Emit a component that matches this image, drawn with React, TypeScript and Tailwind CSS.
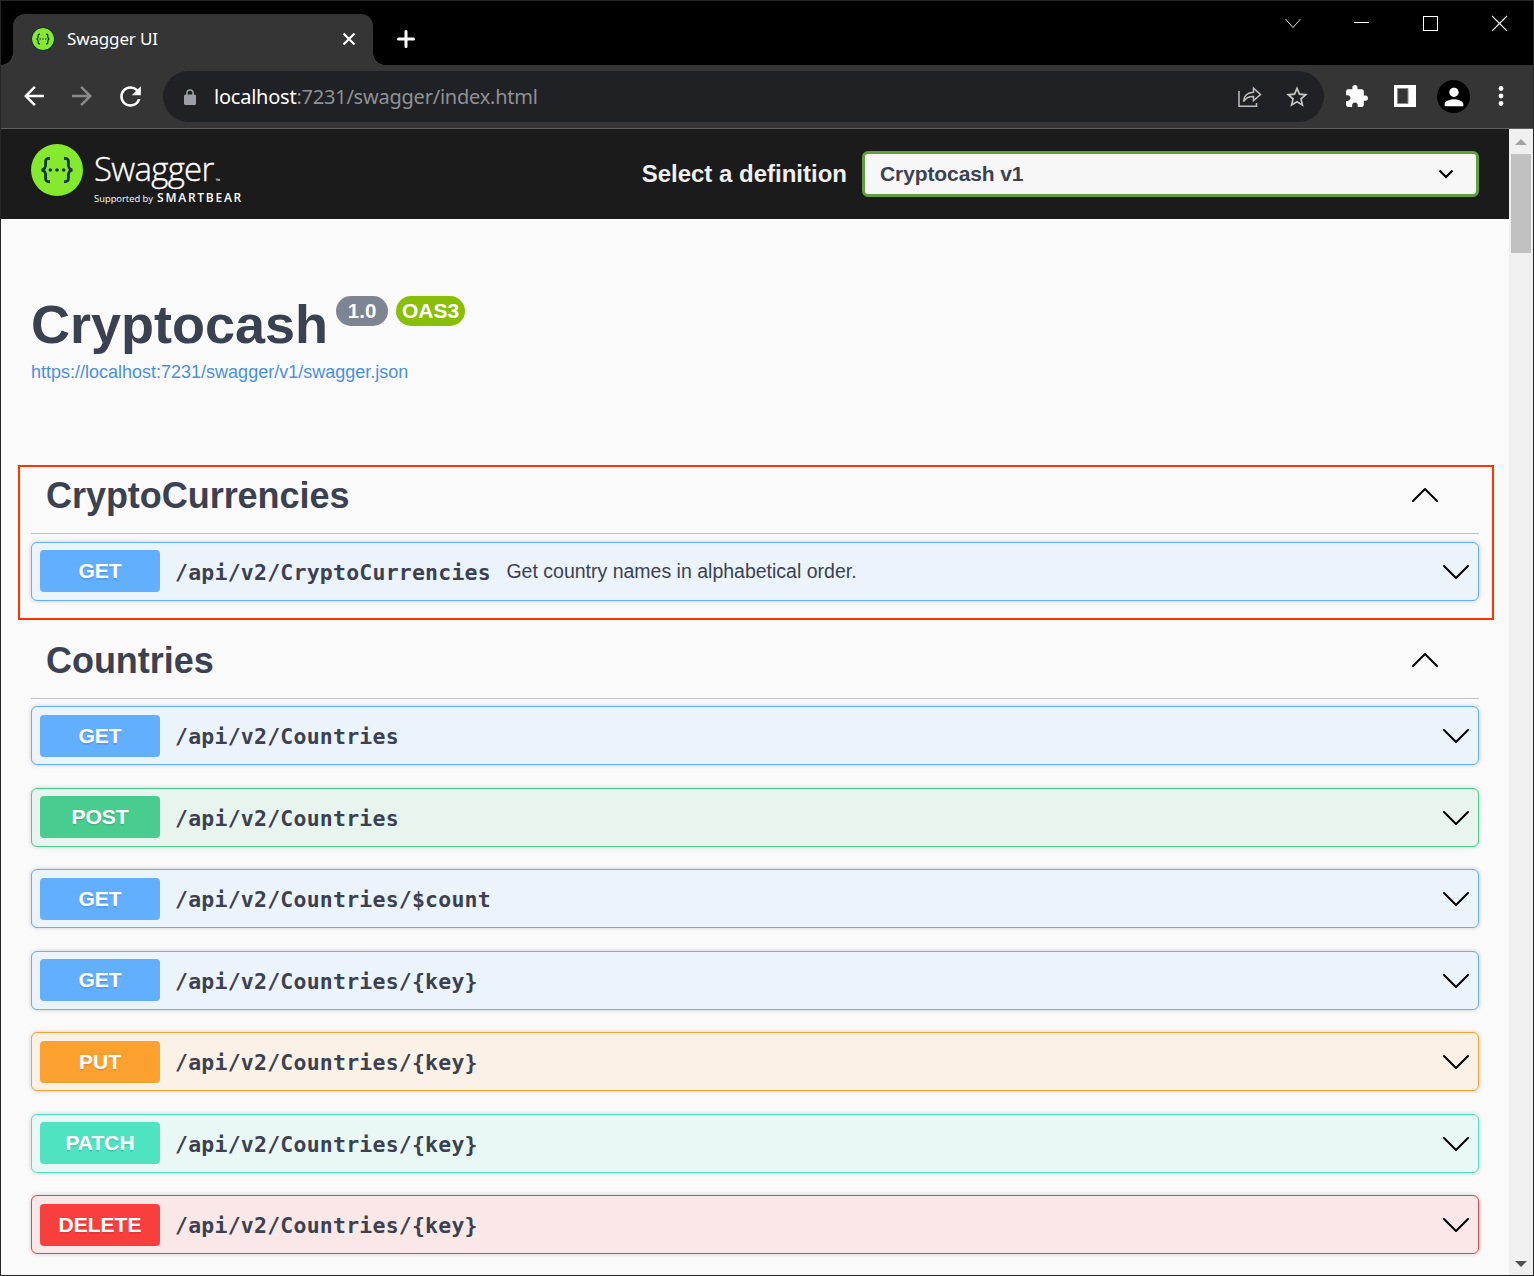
import type { ReactNode } from "react";
import {
  MdArrowBack,
  MdArrowForward,
  MdExtension,
  MdPerson,
  MdRefresh,
  MdStarBorder,
} from "react-icons/md";

type Method = "GET" | "POST" | "PUT" | "PATCH" | "DELETE";

const METHOD_STYLES: Record<Method, { row: string; badge: string }> = {
  GET: { row: "border-[#61affe] bg-[#ebf3fb]", badge: "bg-[#61affe]" },
  POST: { row: "border-[#49cc90] bg-[#e7f5ee]", badge: "bg-[#49cc90]" },
  PUT: { row: "border-[#fca130] bg-[#fbf1e6]", badge: "bg-[#fca130]" },
  PATCH: { row: "border-[#50e3c2] bg-[#e9f8f4]", badge: "bg-[#50e3c2]" },
  DELETE: { row: "border-[#f93e3e] bg-[#fae7e7]", badge: "bg-[#f93e3e]" },
};

const COUNTRY_OPERATIONS: { method: Method; path: string }[] = [
  { method: "GET", path: "/api/v2/Countries" },
  { method: "POST", path: "/api/v2/Countries" },
  { method: "GET", path: "/api/v2/Countries/$count" },
  { method: "GET", path: "/api/v2/Countries/{key}" },
  { method: "PUT", path: "/api/v2/Countries/{key}" },
  { method: "PATCH", path: "/api/v2/Countries/{key}" },
  { method: "DELETE", path: "/api/v2/Countries/{key}" },
];

function SwaggerMark({ className }: { className: string }) {
  return (
    <svg viewBox="0 0 52 52" className={className}>
      <circle cx="26" cy="26" r="26" fill="#85ea2d" />
      <g fill="none" stroke="#173647" strokeWidth="2.9">
        <path d="M19 14.3c-4 0-4.6 1.2-4.4 4.6.2 3.8 0 6.6-4 7.1 4 .5 4.2 3.3 4 7.1-.2 3.4.4 4.6 4.4 4.6" />
        <path d="M33 14.3c4 0 4.6 1.2 4.4 4.6-.2 3.8 0 6.6 4 7.1-4 .5-4.2 3.3-4 7.1.2 3.4-.4 4.6-4.4 4.6" />
      </g>
      <g fill="#173647">
        <circle cx="19.3" cy="26" r="1.8" />
        <circle cx="26" cy="26" r="1.8" />
        <circle cx="32.7" cy="26" r="1.8" />
      </g>
    </svg>
  );
}

function Chevron({ up = false }: { up?: boolean }) {
  return (
    <svg
      width="28"
      height="16"
      viewBox="0 0 28 16"
      className="shrink-0"
      fill="none"
      stroke="#000"
      strokeWidth="2"
      strokeLinecap="round"
      strokeLinejoin="round"
    >
      <path d={up ? "M2 14 14 2l12 12" : "M2 2l12 12L26 2"} />
    </svg>
  );
}

function TitleBar() {
  return (
    <div className="flex h-16 shrink-0 items-end bg-black">
      <div className="size-3 bg-[radial-gradient(circle_at_0_0,transparent_11.5px,#353535_12px)]" />
      <div className="flex h-[51px] w-[360px] items-center rounded-t-xl bg-[#353535] pr-4 pb-0.5 pl-[19px]">
        <SwaggerMark className="size-[22px] shrink-0 rounded-full ring-1 ring-[#173647]" />
        <span className="ml-[13px] grow font-['Noto_Sans'] text-[17px] tracking-[-0.15px] text-white">Swagger UI</span>
        <svg width="16" height="16" viewBox="0 0 16 16" stroke="#fff" strokeWidth="2.2">
          <path d="M2.5 2.5l11 11M13.5 2.5l-11 11" />
        </svg>
      </div>
      <div className="size-3 bg-[radial-gradient(circle_at_100%_0,transparent_11.5px,#353535_12px)]" />
      <svg className="mb-4 ml-[11px]" width="20" height="20" viewBox="0 0 20 20" stroke="#fff" strokeWidth="3" strokeLinecap="round">
        <path d="M10 2.5v15M2.5 10h15" />
      </svg>
      <div className="mr-[25px] ml-auto flex items-center gap-[53px] self-start pt-[14px]">
        <svg width="16" height="16" viewBox="0 0 16 16" fill="none" stroke="#ddd" strokeWidth="1">
          <path d="M.5 4 8 12.5 15.5 4" />
        </svg>
        <svg width="16" height="16" viewBox="0 0 16 16" stroke="#fff" strokeWidth="1">
          <path d="M0 7.5h15" />
        </svg>
        <svg width="16" height="16" viewBox="0 0 16 16" fill="none" stroke="#fff" strokeWidth="1">
          <rect x=".5" y="1.5" width="14" height="14" />
        </svg>
        <svg width="16" height="16" viewBox="0 0 16 16" stroke="#fff" strokeWidth="1.1">
          <path d="M0 1l15 15M15 1L0 16" />
        </svg>
      </div>
    </div>
  );
}

function Toolbar() {
  return (
    <div className="flex h-[64px] shrink-0 items-center border-b border-[#5f5f5f] bg-[#353535] pl-[18px] text-white">
      <MdArrowBack size={30} className="mb-0.5 shrink-0" />
      <MdArrowForward size={30} className="mb-0.5 ml-[18px] shrink-0 text-[#8a8a8a]" />
      <MdRefresh size={31} className="mb-px ml-[18px] shrink-0" />
      <div className="ml-[17px] flex h-[51px] w-[1161px] shrink-0 items-center rounded-full bg-[#202124] pr-3.5 pl-[21px]">
        <svg width="12" height="16" viewBox="0 0 12 16" className="shrink-0">
          <rect y="5.5" width="12" height="10.5" rx="1.5" fill="#9aa0a6" />
          <path d="M2.9 6V4a3.1 3.1 0 0 1 6.2 0v2" fill="none" stroke="#9aa0a6" strokeWidth="1.5" />
        </svg>
        <span className="ml-[18px] grow font-['Noto_Sans'] text-[20px] tracking-[-0.23px] whitespace-nowrap text-[#8f9194]">
          <span className="text-white">localhost</span>:7231/swagger/index.html
        </span>
        <svg width="24" height="22" viewBox="0 0 24 22" fill="none" stroke="#bdbdbd" strokeWidth="1.5" className="mr-[22px]">
          <path d="M1 5v15.2h17.5V17" />
          <path d="M5.5 15.5C6 9 10 6.5 15.5 6.3V2.2l7 6.3-7 6v-4.1C11 10.2 8 11.5 5.5 15.5Z" />
        </svg>
        <MdStarBorder size={26} className="shrink-0 text-[#c4c4c4]" />
      </div>
      <MdExtension size={25} className="mb-px ml-5 shrink-0" />
      <svg width="22" height="22" viewBox="0 0 22 22" className="mb-0.5 ml-[25px] shrink-0">
        <path d="M0 0h22v22H0z" fill="#fff" />
        <path d="M3.5 3.5h10.500v15H3.500z" fill="#353535" stroke="#8a8a8a" />
      </svg>
      <div className="ml-[21px] flex size-[33px] shrink-0 items-center justify-center rounded-full bg-black">
        <MdPerson size={28} />
      </div>
      <svg width="6" height="22" viewBox="0 0 6 22" fill="#fff" className="mb-0.5 ml-7 shrink-0">
        <circle cx="3" cy="3.5" r="2.4" />
        <circle cx="3" cy="11" r="2.4" />
        <circle cx="3" cy="18.5" r="2.4" />
      </svg>
    </div>
  );
}

function Topbar() {
  return (
    <header className="flex h-[90px] shrink-0 items-center bg-[#1b1b1b] pr-[30px] pl-[30px]">
      <SwaggerMark className="mb-2 size-[52px] shrink-0" />
      <div className="ml-[11px] flex flex-col pt-[5px] text-white">
        <div className="flex h-[42px] items-end font-['Open_Sans'] leading-[42px]">
          <span className="text-[33px] font-light tracking-[-0.7px] [-webkit-text-stroke:0.35px_#fff]">Swagger</span>
          <span className="pb-[6px] pl-0.5 text-[6px] leading-[6px]">™</span>
        </div>
        <div className="flex h-4 items-baseline font-['Open_Sans'] leading-4 whitespace-nowrap">
          <span className="text-[9.4px]">Supported by</span>
          <span className="ml-1 text-[12px] font-semibold tracking-[1.75px]">SMARTBEAR</span>
        </div>
      </div>
      <span className="ml-auto text-2xl font-bold whitespace-nowrap text-[#f0f0f0]">Select a definition</span>
      <div className="ml-[15px] flex h-[46px] w-[617px] items-center justify-between rounded-md border-[3px] border-[#62a03f] bg-[#f7f7f7] pr-[22px] pl-[15px]">
        <span className="text-[21px] font-bold tracking-[-0.1px] text-[#3b4151]">Cryptocash v1</span>
        <svg width="16" height="10" viewBox="0 0 16 10" fill="none" stroke="#000" strokeWidth="2.2">
          <path d="M1.5 1.5 8 8l6.5-6.5" />
        </svg>
      </div>
    </header>
  );
}

function Operation({ method, path, summary }: { method: Method; path: string; summary?: string }) {
  const styles = METHOD_STYLES[method];
  return (
    <div className={`flex h-[59px] shrink-0 items-center rounded-md border pr-2 pl-2 shadow-[0_0_4px_rgba(0,0,0,0.19)] ${styles.row}`}>
      <span
        className={`flex h-[42px] w-[120px] items-center justify-center rounded-[4px] pb-px text-[21px] font-bold text-white [text-shadow:0_1.5px_0_rgba(0,0,0,0.1)] ${styles.badge}`}
      >
        {method}
      </span>
      <span className="ml-[15px] pt-[3px] font-['DejaVu_Sans_Mono'] text-[21.5px] font-bold tracking-[0.22px] text-[#3b4151]">{path}</span>
      {summary && <span className="ml-[15.5px] text-[19.5px] text-[#3b4151]">{summary}</span>}
      <span className="ml-auto pt-px">
        <Chevron />
      </span>
    </div>
  );
}

function TagHeader({ children }: { children: ReactNode }) {
  return (
    <h3 className="flex h-[76px] shrink-0 items-center justify-between border-b border-[#3b4151]/30 pr-10 pl-[15px] text-4xl font-bold tracking-[-0.04px] text-[#3b4151]">
      {children}
      <span className="pb-0.5">
        <Chevron up />
      </span>
    </h3>
  );
}

function Scrollbar() {
  return (
    <div className="flex w-6 shrink-0 flex-col items-center bg-[#f0f0f0]">
      <svg width="12" height="6" viewBox="0 0 12 6" className="mt-[10px]" fill="#a3a3a3">
        <path d="M6 0l6 6H0z" />
      </svg>
      <div className="mt-[9px] h-[99px] w-5 bg-[#c1c1c1]" />
      <svg width="12" height="6" viewBox="0 0 12 6" className="mt-auto mb-2" fill="#505050">
        <path d="M0 0h12L6 6z" />
      </svg>
    </div>
  );
}

export default function App() {
  return (
    <div className="flex h-[1276px] w-[1534px] flex-col overflow-hidden border border-[#262626] bg-[#fafafa] font-['Liberation_Sans',sans-serif]">
      <TitleBar />
      <Toolbar />
      <div className="flex min-h-0 grow">
        <main className="flex min-w-0 grow flex-col overflow-hidden">
          <Topbar />
          <div className="flex flex-col px-[30px]">
            <div className="mt-[75px] flex h-[63px] items-start">
              <h1 className="text-[54px] leading-[60px] font-bold text-[#3b4151]">Cryptocash</h1>
              <span className="mt-0.5 ml-2 flex h-[30px] w-[52px] items-center justify-center rounded-full bg-[#7d8492] text-[20.5px] font-bold text-white">
                1.0
              </span>
              <span className="mt-0.5 ml-2 flex h-[30px] w-[69px] items-center justify-center rounded-full bg-[#89bf04] text-[21px] font-bold text-white">
                OAS3
              </span>
            </div>
            <a className="mt-1 text-[18px] leading-[22px] text-[#4990e2]">https://localhost:7231/swagger/v1/swagger.json</a>
            <section className="relative mt-[75px] flex flex-col">
              <TagHeader>CryptoCurrencies</TagHeader>
              <div className="mt-[7.75px] flex flex-col">
                <Operation method="GET" path="/api/v2/CryptoCurrencies" summary="Get country names in alphabetical order." />
              </div>
              <div className="pointer-events-none absolute top-[7px] -right-[15px] -left-[13px] h-[155px] border-2 border-[#ff3300]" />
            </section>
            <section className="mt-[22.25px] flex flex-col">
              <TagHeader>Countries</TagHeader>
              <div className="mt-[7.25px] flex flex-col gap-[22.5px]">
                {COUNTRY_OPERATIONS.map((op) => (
                  <Operation key={`${op.method} ${op.path}`} {...op} />
                ))}
              </div>
            </section>
          </div>
        </main>
        <Scrollbar />
      </div>
    </div>
  );
}
